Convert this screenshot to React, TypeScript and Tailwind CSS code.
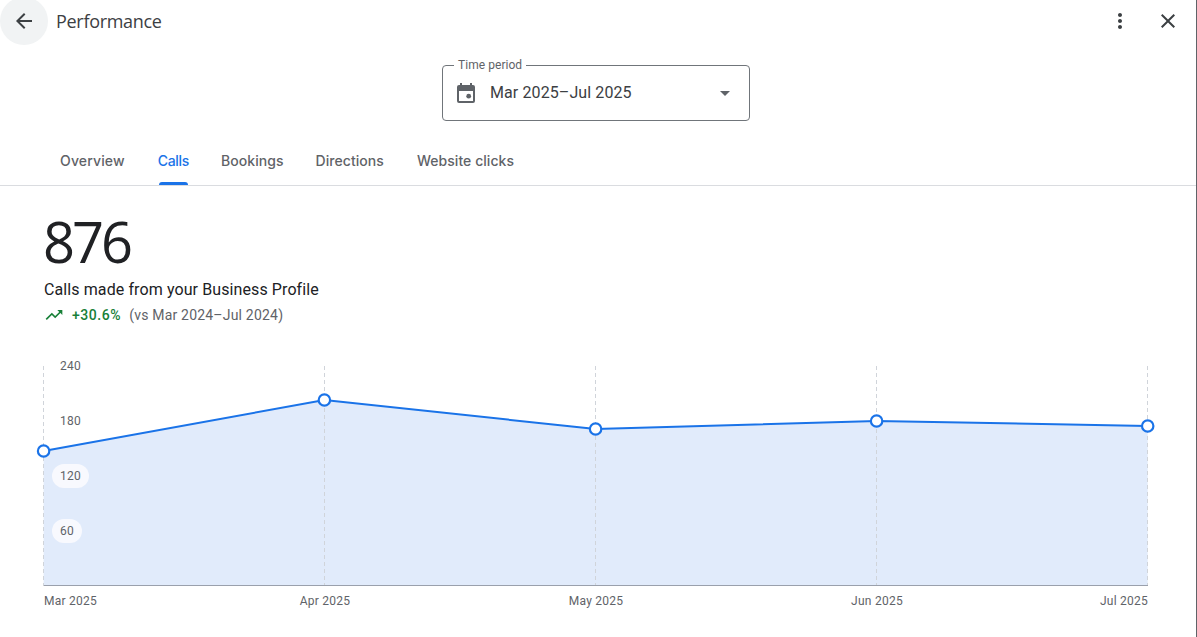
import React from "react";

const points: [number, number][] = [[43.6, 451], [324.4, 400], [595.6, 429], [876.6, 421], [1147.7, 426]];
const line = points.map((p) => p.join(",")).join(" ");
const area = `43.6,585 ${line} 1147.7,585`;
const tabs = [
  { t: "Overview", c: "tracking-[0.15px] text-[#5f6368]" },
  { t: "Calls", c: "ml-[1px] tracking-[-0.3px] text-[#1a73e8]" },
  { t: "Bookings", c: "tracking-[0.05px] text-[#5f6368]" },
  { t: "Directions", c: "tracking-[0.05px] text-[#5f6368]" },
  { t: "Website clicks", c: "ml-[1px] tracking-[0.05px] text-[#5f6368]" },
];
const xLabels: { t: string; x: number; a: "start" | "middle" | "end" }[] = [
  { t: "Mar 2025", x: 44, a: "start" },
  { t: "Apr 2025", x: 325, a: "middle" },
  { t: "May 2025", x: 596, a: "middle" },
  { t: "Jun 2025", x: 877, a: "middle" },
  { t: "Jul 2025", x: 1148, a: "end" },
];
const yLabels = [{ t: "240", y: 366 }, { t: "180", y: 421 }, { t: "120", y: 476 }, { t: "60", y: 531 }];

export default function App() {
  return (
    <div className="w-[1197px] h-[637px] overflow-hidden bg-white border-r border-[#5f6368] font-['Roboto',sans-serif] text-[#202124]">
      <header className="h-[42px] flex items-center">
        <button className="w-12 h-12 rounded-full bg-[#f1f3f4] flex items-center justify-center shrink-0">
          <svg width="24" height="24" viewBox="0 0 24 24" fill="#3c4043"><path d="M20 11H7.83l5.59-5.59L12 4l-8 8 8 8 1.41-1.41L7.83 13H20z" /></svg>
        </button>
        <h1 className="ml-2 text-[18px] leading-6 font-normal text-[#3c4043] font-['Open_Sans',sans-serif] tracking-[-0.3px]">Performance</h1>
        <div className="ml-auto flex items-center pr-[16px] gap-6">
          <svg width="24" height="24" viewBox="0 0 24 24" fill="#3c4043"><path d="M12 8c1.1 0 2-.9 2-2s-.9-2-2-2-2 .9-2 2 .9 2 2 2zm0 2c-1.1 0-2 .9-2 2s.9 2 2 2 2-.9 2-2-.9-2-2-2zm0 6c-1.1 0-2 .9-2 2s.9 2 2 2 2-.9 2-2-.9-2-2-2z" /></svg>
          <svg width="24" height="24" viewBox="0 0 24 24" fill="#3c4043"><path d="M19 6.41 17.59 5 12 10.59 6.41 5 5 6.41 10.59 12 5 17.59 6.41 19 12 13.41 17.59 19 19 17.59 13.41 12z" /></svg>
        </div>
      </header>

      <div className="relative mt-[23px] ml-[442px] w-[308px] h-[56px] rounded border border-[#70757a] flex items-center pl-[11px] pr-[12px]">
        <span className="absolute -top-[9px] left-[11px] bg-white px-[4px] text-[12px] leading-4 text-[#5f6368] tracking-[0.05px]">Time period</span>
        <svg width="24" height="24" viewBox="0 0 24 24" fill="#5f6368"><path fillRule="evenodd" d="M8 2v2h8V2h2v2h1a2 2 0 0 1 2 2v14a2 2 0 0 1-2 2H5a2 2 0 0 1-2-2V6a2 2 0 0 1 2-2h1V2zM5 10v10h14V10z" /><circle cx="14.7" cy="15.2" r="2.4" /></svg>
        <span className="ml-[12px] text-[16px] leading-6 text-[#3c4043] tracking-[0.1px]">Mar 2025–Jul 2025</span>
        <svg className="ml-auto" width="24" height="24" viewBox="0 0 24 24" fill="#5f6368"><path d="M7 10l5 5 5-5z" /></svg>
      </div>

      <nav className="mt-[16px] h-[49px] border-b border-[#dadce0] flex pl-[60px] gap-[32px]">
        {tabs.map(({ t, c }) => (
          <div key={t} className={`relative h-[48px] pb-[2px] flex items-center text-[14px] font-medium font-['Inter',sans-serif] ${c}`}>
            {t}
            {t === "Calls" && <span className="absolute bottom-0 left-[1px] right-[1px] h-[3px] rounded-t-[3px] bg-[#1a73e8]" />}
          </div>
        ))}
      </nav>

      <section className="pl-[44px] mt-[23px]">
        <div className="-ml-[1px] text-[56px] leading-[64px] tracking-[-3px] text-[#202124] font-['Open_Sans',sans-serif]">876</div>
        <div className="mt-[5px] text-[16px] leading-6 text-[#202124] tracking-[0.1px]">Calls made from your Business Profile</div>
        <div className="mt-[1px] flex items-center text-[14px] leading-6 tracking-[0.2px]">
          <svg width="20" height="20" viewBox="0 0 24 24" fill="#188038"><path d="M16 6l2.29 2.29-4.88 4.88-4-4L2 16.59 3.41 18l6-6 4 4 6.3-6.29L22 12V6z" /></svg>
          <span className="ml-[8px] font-medium text-[#188038] tracking-[0.55px]">+30.6%</span>
          <span className="ml-[8px] text-[#5f6368]">(vs Mar 2024–Jul 2024)</span>
        </div>
      </section>

      <svg className="block mt-[23px] tracking-[0.25px]" width="1196" height="270" viewBox="0 350 1196 270" fontSize="12" fill="#5f6368">
        <polygon points={area} fill="#e1ebfb" />
        {[43.5, 324.5, 595.5, 876.5, 1147.5].map((x) => (
          <line key={x} x1={x} x2={x} y1="366" y2="585" stroke="#d0d4da" strokeDasharray="4 3" />
        ))}
        <line x1="43.5" x2="1148" y1="585.5" y2="585.5" stroke="#9aa0ac" />
        <rect x="52" y="464" width="37" height="24" rx="12" fill="#f8f9fe" />
        <rect x="52" y="519" width="30" height="24" rx="12" fill="#f8f9fe" />
        {yLabels.map((l) => (
          <text key={l.t} x="60" y={l.y + 4}>{l.t}</text>
        ))}
        <polyline points={line} fill="none" stroke="#1a73e8" strokeWidth="2" />
        {points.map(([x, y]) => (
          <circle key={x} cx={x} cy={y} r="5.7" fill="#fff" stroke="#1a73e8" strokeWidth="2.2" />
        ))}
        {xLabels.map((l) => (
          <text key={l.t} x={l.x} y="605" textAnchor={l.a}>{l.t}</text>
        ))}
      </svg>
    </div>
  );
}
